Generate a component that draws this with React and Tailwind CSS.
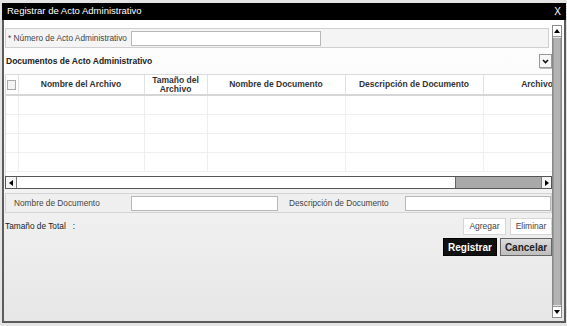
import React from 'react';

const font = { fontFamily: '"Liberation Sans", Arial, sans-serif' };

function Tri({ dir }) {
  // flechas pequeñas hechas con bordes
  if (dir === 'up') return <span className="block w-0 h-0 border-l-[3px] border-r-[3px] border-b-[4px] border-l-transparent border-r-transparent border-b-black" />;
  if (dir === 'down') return <span className="block w-0 h-0 border-l-[3px] border-r-[3px] border-t-[4px] border-l-transparent border-r-transparent border-t-black" />;
  if (dir === 'left') return <span className="block w-0 h-0 border-t-[3px] border-b-[3px] border-r-[4px] border-t-transparent border-b-transparent border-r-black" />;
  return <span className="block w-0 h-0 border-t-[3px] border-b-[3px] border-l-[4px] border-t-transparent border-b-transparent border-l-black" />;
}

function App() {
  const columns = [
    { w: 12, label: '' },
    { w: 126, label: 'Nombre del Archivo' },
    { w: 63, label: 'Tamaño del Archivo' },
    { w: 138, label: 'Nombre de Documento' },
    { w: 138, label: 'Descripción de Documento' },
    { w: 108, label: 'Archivo' },
  ];
  const rows = [0, 1, 2, 3];

  return (
    <div className="w-[567px] h-[326px] bg-[#e4e4e4] pt-[3px] pl-[2px] pr-[1px] pb-[3px] overflow-hidden" style={font}>
      <div className="h-full flex flex-col">
        {/* barra de título */}
        <div className="h-[17px] bg-black flex items-center justify-between pl-[5px] pr-[5px] shrink-0">
          <span className="text-white text-[9.5px]">Registrar de Acto Administrativo</span>
          <span className="text-white text-[10px]">X</span>
        </div>

        <div className="flex-1 flex border-l-2 border-r-2 border-b-2 border-[#5c5c5c] bg-gradient-to-b from-white via-[#f4f4f4] to-[#e6e6e6] pt-[5px] pr-[2px] pb-[3px] min-h-0">
          {/* contenido */}
          <div className="flex-1 flex flex-col pl-[1px] min-w-0">
            {/* Número de acto */}
            <div className="mt-[3px] h-[20px] mr-[3px] flex items-center border border-[#d0d0d0] bg-[#f4f4f4]">
              <span className="w-[125px] pl-[2px] text-[8.3px] text-[#444]">* Número de Acto Administrativo</span>
              <div className="w-[190px] h-[15px] border border-[#b8b8b8] bg-white" />
            </div>

            {/* encabezado de sección */}
            <div className="mt-[6px] h-[14px] flex items-center justify-between">
              <span className="pl-[1px] text-[8.5px] font-bold text-[#222]">Documentos de Acto Administrativo</span>
              <div className="w-[13px] h-[14px] border border-[#999] bg-[#f6f6f6] flex items-center justify-center shadow-[1px_1px_0_#bbb]">
                <svg width="7" height="5" viewBox="0 0 7 5">
                  <path d="M1 1 L3.5 3.5 L6 1" fill="none" stroke="#111" strokeWidth="1.6" />
                </svg>
              </div>
            </div>

            {/* tabla */}
            <div className="mt-[6px] h-[102px] overflow-hidden bg-white border-t border-l border-[#dcdcdc]">
              <table className="table-fixed border-collapse w-[585px]">
                <colgroup>
                  {columns.map((c, i) => (
                    <col key={i} style={{ width: c.w }} />
                  ))}
                </colgroup>
                <thead>
                  <tr className="h-[20px] border-b-2 border-[#d6d6d6]">
                    {columns.map((c, i) => (
                      <th key={i} className="border-r border-[#e2e2e2] text-[8.5px] font-bold text-[#333] leading-[9px] text-center p-0">
                        {i === 0 ? (
                          <div className="mx-auto w-[9px] h-[10px] border border-[#aaa] bg-[#f4f4f4]" />
                        ) : i === 2 ? (
                          <span>Tamaño del<br />Archivo</span>
                        ) : (
                          c.label
                        )}
                      </th>
                    ))}
                  </tr>
                </thead>
                <tbody>
                  {rows.map((r) => (
                    <tr key={r} className="h-[19px] border-b border-[#efefef]">
                      {columns.map((c, i) => (
                        <td key={i} className="border-r border-[#efefef] p-0" />
                      ))}
                    </tr>
                  ))}
                </tbody>
              </table>
            </div>

            {/* barra horizontal */}
            <div className="h-[13px] flex border border-[#555] bg-white">
              <div className="w-[11px] border-r border-[#777] bg-[#f4f4f4] flex items-center justify-center">
                <Tri dir="left" />
              </div>
              <div className="flex-1 flex justify-end">
                <div className="w-[86px] bg-[#a9a9a9] border-l border-[#666]" />
              </div>
              <div className="w-[10px] border-l border-[#777] bg-[#f4f4f4] flex items-center justify-center">
                <Tri dir="right" />
              </div>
            </div>

            {/* nombre / descripción */}
            <div className="mt-[4px] h-[20px] flex items-center border border-[#d4d4d4] bg-[#efefef]">
              <span className="w-[125px] pl-[8px] text-[8.3px] text-[#444]">Nombre de Documento</span>
              <div className="w-[147px] h-[15px] border border-[#b8b8b8] bg-white" />
              <span className="w-[127px] pl-[11px] text-[8.3px] text-[#444]">Descripción de Documento</span>
              <div className="flex-1 h-[15px] border border-[#b8b8b8] bg-white" />
            </div>

            {/* total y botones */}
            <div className="mt-[5px] h-[17px] flex items-center justify-between">
              <span className="text-[8.3px] text-[#222]">Tamaño de Total&nbsp;&nbsp;&nbsp;:</span>
              <div className="flex gap-[4px]">
                <button className="w-[43px] h-[17px] border border-[#d6d6d6] bg-white text-[8.5px] text-[#444]">Agregar</button>
                <button className="w-[42px] h-[17px] border border-[#d6d6d6] bg-white text-[8.5px] text-[#444]">Eliminar</button>
              </div>
            </div>

            <div className="mt-[3px] h-[18px] flex justify-end gap-[3px]">
              <button className="w-[54px] h-[18px] bg-[#111] border border-black text-white text-[10px] font-bold">Registrar</button>
              <button className="w-[52px] h-[18px] bg-gradient-to-b from-[#dcdcdc] to-[#bdbdbd] border border-[#666] text-[#222] text-[10px] font-bold">Cancelar</button>
            </div>
          </div>

          {/* barra vertical */}
          <div className="w-[10px] flex flex-col border border-[#8a8a8a] bg-[#e0e0e0]">
            <div className="h-[11px] bg-white border-b border-[#999] flex items-center justify-center">
              <Tri dir="up" />
            </div>
            <div className="flex-1 my-[1px] bg-[#b3b3b3] border-x border-[#9a9a9a]" />
            <div className="h-[11px] bg-white border-t border-[#999] flex items-center justify-center">
              <Tri dir="down" />
            </div>
          </div>
        </div>
      </div>
    </div>
  );
}

export default App;
